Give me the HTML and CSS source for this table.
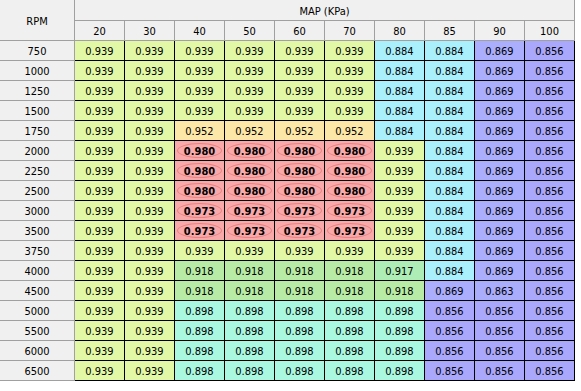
FILE: index.html
```html
<!DOCTYPE html>
<html>
<head>
<meta charset="utf-8">
<link rel="stylesheet" href="styles.css">
</head>
<body>
<div class="grid">
  <div class="cell hd rpm-title">RPM</div>
  <div class="cell hd map-title">MAP (KPa)</div>
  <div class="cell hd">20</div><div class="cell hd">30</div><div class="cell hd">40</div><div class="cell hd">50</div><div class="cell hd">60</div><div class="cell hd">70</div><div class="cell hd">80</div><div class="cell hd">85</div><div class="cell hd">90</div><div class="cell hd">100</div>

  <div class="cell hd">750</div>
  <div class="cell c939">0.939</div><div class="cell c939">0.939</div><div class="cell c939">0.939</div><div class="cell c939">0.939</div><div class="cell c939">0.939</div><div class="cell c939">0.939</div><div class="cell c884">0.884</div><div class="cell c884">0.884</div><div class="cell c869">0.869</div><div class="cell c856">0.856</div>

  <div class="cell hd">1000</div>
  <div class="cell c939">0.939</div><div class="cell c939">0.939</div><div class="cell c939">0.939</div><div class="cell c939">0.939</div><div class="cell c939">0.939</div><div class="cell c939">0.939</div><div class="cell c884">0.884</div><div class="cell c884">0.884</div><div class="cell c869">0.869</div><div class="cell c856">0.856</div>

  <div class="cell hd">1250</div>
  <div class="cell c939">0.939</div><div class="cell c939">0.939</div><div class="cell c939">0.939</div><div class="cell c939">0.939</div><div class="cell c939">0.939</div><div class="cell c939">0.939</div><div class="cell c884">0.884</div><div class="cell c884">0.884</div><div class="cell c869">0.869</div><div class="cell c856">0.856</div>

  <div class="cell hd">1500</div>
  <div class="cell c939">0.939</div><div class="cell c939">0.939</div><div class="cell c939">0.939</div><div class="cell c939">0.939</div><div class="cell c939">0.939</div><div class="cell c939">0.939</div><div class="cell c884">0.884</div><div class="cell c884">0.884</div><div class="cell c869">0.869</div><div class="cell c856">0.856</div>

  <div class="cell hd">1750</div>
  <div class="cell c939">0.939</div><div class="cell c939">0.939</div><div class="cell c952">0.952</div><div class="cell c952">0.952</div><div class="cell c952">0.952</div><div class="cell c952">0.952</div><div class="cell c884">0.884</div><div class="cell c884">0.884</div><div class="cell c869">0.869</div><div class="cell c856">0.856</div>

  <div class="cell hd">2000</div>
  <div class="cell c939">0.939</div><div class="cell c939">0.939</div><div class="cell hot">0.980</div><div class="cell hot">0.980</div><div class="cell hot">0.980</div><div class="cell hot">0.980</div><div class="cell c939">0.939</div><div class="cell c884">0.884</div><div class="cell c869">0.869</div><div class="cell c856">0.856</div>

  <div class="cell hd">2250</div>
  <div class="cell c939">0.939</div><div class="cell c939">0.939</div><div class="cell hot">0.980</div><div class="cell hot">0.980</div><div class="cell hot">0.980</div><div class="cell hot">0.980</div><div class="cell c939">0.939</div><div class="cell c884">0.884</div><div class="cell c869">0.869</div><div class="cell c856">0.856</div>

  <div class="cell hd">2500</div>
  <div class="cell c939">0.939</div><div class="cell c939">0.939</div><div class="cell hot">0.980</div><div class="cell hot">0.980</div><div class="cell hot">0.980</div><div class="cell hot">0.980</div><div class="cell c939">0.939</div><div class="cell c884">0.884</div><div class="cell c869">0.869</div><div class="cell c856">0.856</div>

  <div class="cell hd">3000</div>
  <div class="cell c939">0.939</div><div class="cell c939">0.939</div><div class="cell hot">0.973</div><div class="cell hot">0.973</div><div class="cell hot">0.973</div><div class="cell hot">0.973</div><div class="cell c939">0.939</div><div class="cell c884">0.884</div><div class="cell c869">0.869</div><div class="cell c856">0.856</div>

  <div class="cell hd">3500</div>
  <div class="cell c939">0.939</div><div class="cell c939">0.939</div><div class="cell hot">0.973</div><div class="cell hot">0.973</div><div class="cell hot">0.973</div><div class="cell hot">0.973</div><div class="cell c939">0.939</div><div class="cell c884">0.884</div><div class="cell c869">0.869</div><div class="cell c856">0.856</div>

  <div class="cell hd">3750</div>
  <div class="cell c939">0.939</div><div class="cell c939">0.939</div><div class="cell c939">0.939</div><div class="cell c939">0.939</div><div class="cell c939">0.939</div><div class="cell c939">0.939</div><div class="cell c939">0.939</div><div class="cell c884">0.884</div><div class="cell c869">0.869</div><div class="cell c856">0.856</div>

  <div class="cell hd">4000</div>
  <div class="cell c939">0.939</div><div class="cell c939">0.939</div><div class="cell c918">0.918</div><div class="cell c918">0.918</div><div class="cell c918">0.918</div><div class="cell c918">0.918</div><div class="cell c917">0.917</div><div class="cell c884">0.884</div><div class="cell c869">0.869</div><div class="cell c856">0.856</div>

  <div class="cell hd">4500</div>
  <div class="cell c939">0.939</div><div class="cell c939">0.939</div><div class="cell c918">0.918</div><div class="cell c918">0.918</div><div class="cell c918">0.918</div><div class="cell c918">0.918</div><div class="cell c918">0.918</div><div class="cell c869">0.869</div><div class="cell c863">0.863</div><div class="cell c856">0.856</div>

  <div class="cell hd">5000</div>
  <div class="cell c939">0.939</div><div class="cell c939">0.939</div><div class="cell c898">0.898</div><div class="cell c898">0.898</div><div class="cell c898">0.898</div><div class="cell c898">0.898</div><div class="cell c898">0.898</div><div class="cell c856">0.856</div><div class="cell c856">0.856</div><div class="cell c856">0.856</div>

  <div class="cell hd">5500</div>
  <div class="cell c939">0.939</div><div class="cell c939">0.939</div><div class="cell c898">0.898</div><div class="cell c898">0.898</div><div class="cell c898">0.898</div><div class="cell c898">0.898</div><div class="cell c898">0.898</div><div class="cell c856">0.856</div><div class="cell c856">0.856</div><div class="cell c856">0.856</div>

  <div class="cell hd">6000</div>
  <div class="cell c939">0.939</div><div class="cell c939">0.939</div><div class="cell c898">0.898</div><div class="cell c898">0.898</div><div class="cell c898">0.898</div><div class="cell c898">0.898</div><div class="cell c898">0.898</div><div class="cell c856">0.856</div><div class="cell c856">0.856</div><div class="cell c856">0.856</div>

  <div class="cell hd">6500</div>
  <div class="cell c939">0.939</div><div class="cell c939">0.939</div><div class="cell c898">0.898</div><div class="cell c898">0.898</div><div class="cell c898">0.898</div><div class="cell c898">0.898</div><div class="cell c898">0.898</div><div class="cell c856">0.856</div><div class="cell c856">0.856</div><div class="cell c856">0.856</div>
</div>
</body>
</html>
```

FILE: styles.css
```css
html, body {
  margin: 0;
  padding: 0;
  background: #ffffff;
}

body {
  font-family: "DejaVu Sans Condensed", "Liberation Sans", sans-serif;
  font-size: 11px;
  color: #000;
}

.grid {
  display: grid;
  grid-template-columns: 75px repeat(10, 50px);
  grid-template-rows: 21px repeat(18, 20px);
  width: 575px;
}

.cell {
  box-sizing: border-box;
  border-right: 1px solid #000;
  border-bottom: 1px solid #000;
  display: flex;
  align-items: center;
  justify-content: center;
  padding-top: 2px;
}

.hd {
  background: #f0f0f0;
  border-color: #a0a0a0;
}

.rpm-title {
  grid-row: span 2;
  padding-top: 3px;
}

.map-title {
  grid-column: span 10;
}

.c939 { background: #e2f8a6; }
.c884 { background: #aaeffc; }
.c869 { background: #aaaefc; }
.c863 { background: #aaacfc; }
.c856 { background: #aaa8fc; }
.c952 { background: #fde7a8; }
.c918 { background: #b8eca6; }
.c917 { background: #aeedb6; }
.c898 { background: #aaf8e0; }

.hot {
  background: #f9a9a9;
  font-weight: bold;
  position: relative;
}

.hot::before {
  content: "";
  position: absolute;
  top: 2px;
  bottom: 2px;
  left: 2px;
  right: 2px;
  border: 1px solid rgba(200, 60, 60, 0.35);
  border-radius: 50%;
}
```
